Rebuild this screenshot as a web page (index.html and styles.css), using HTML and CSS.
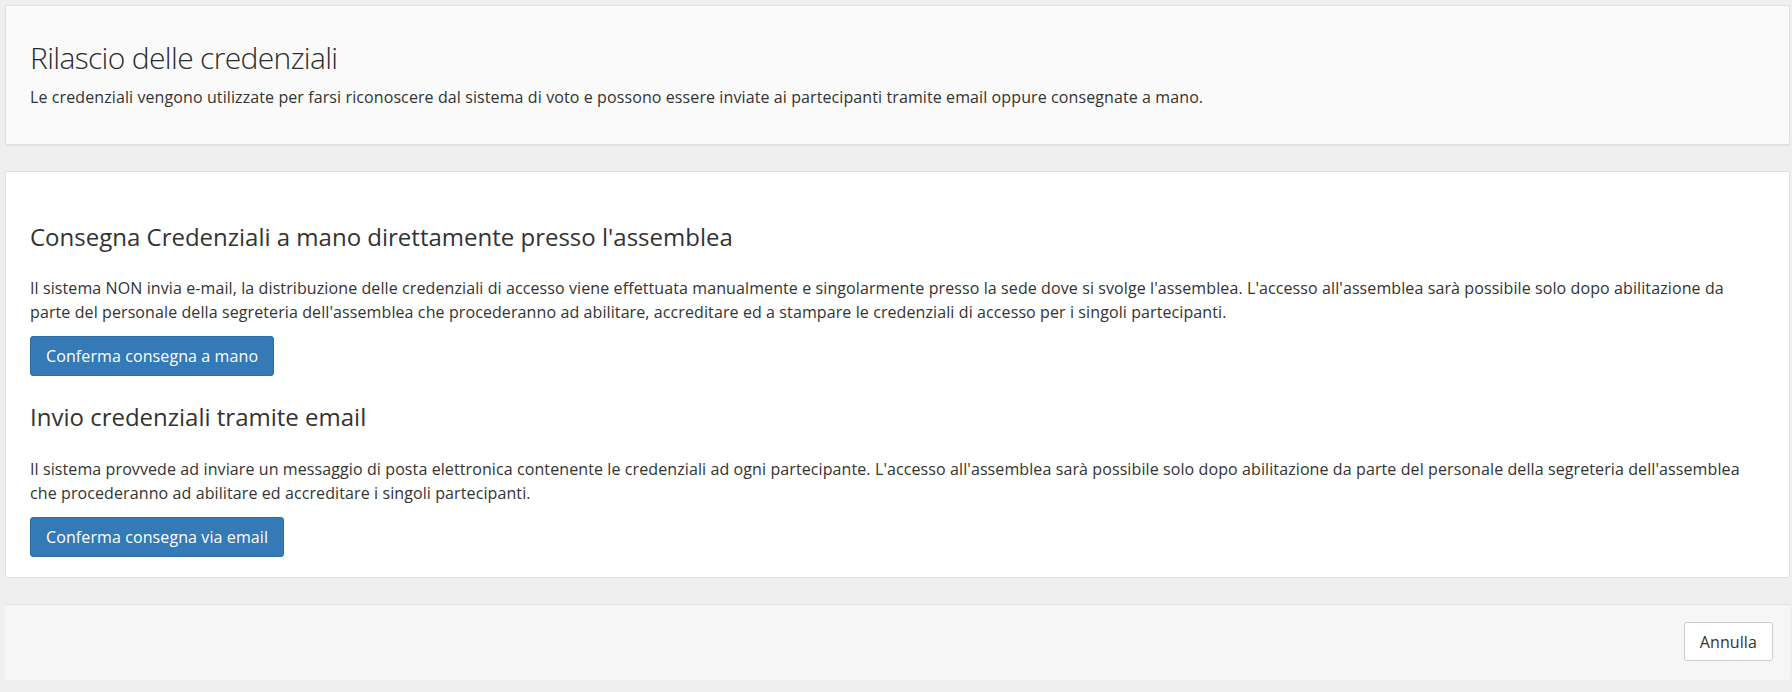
FILE: index.html
```html
<!DOCTYPE html>
<html lang="it">
<head>
<meta charset="utf-8">
<title>Rilascio delle credenziali</title>
<link rel="stylesheet" href="styles.css">
</head>
<body>
<div class="page">
  <section class="panel panel-head">
    <h2 class="title">Rilascio delle credenziali</h2>
    <p class="text">Le credenziali vengono utilizzate per farsi riconoscere dal sistema di voto e possono essere inviate ai partecipanti tramite email oppure consegnate a mano.</p>
  </section>
  <section class="panel panel-main">
    <h3 class="subtitle">Consegna Credenziali a mano direttamente presso l'assemblea</h3>
    <p class="text">Il sistema NON invia e-mail, la distribuzione delle credenziali di accesso viene effettuata manualmente e singolarmente presso la sede dove si svolge l'assemblea. L'accesso all'assemblea sarà possibile solo dopo abilitazione da parte del personale della segreteria dell'assemblea che procederanno ad abilitare, accreditare ed a stampare le credenziali di accesso per i singoli partecipanti.</p>
    <button class="btn btn-primary" type="button">Conferma consegna a mano</button>
    <h3 class="subtitle second">Invio credenziali tramite email</h3>
    <p class="text">Il sistema provvede ad inviare un messaggio di posta elettronica contenente le credenziali ad ogni partecipante. L'accesso all'assemblea sarà possibile solo dopo abilitazione da parte del personale della segreteria dell'assemblea che procederanno ad abilitare ed accreditare i singoli partecipanti.</p>
    <button class="btn btn-primary" type="button">Conferma consegna via email</button>
  </section>
  <footer class="panel panel-foot">
    <button class="btn btn-default" type="button">Annulla</button>
  </footer>
</div>
</body>
</html>
```

FILE: styles.css
```css
* { box-sizing: border-box; }
html, body {
  margin: 0;
  padding: 0;
}
body {
  background: #efefef;
  font-family: "Open Sans", "Noto Sans", "Liberation Sans", sans-serif;
  color: #333;
  width: 1792px;
  height: 692px;
  overflow: hidden;
}
.page {
  display: flex;
  flex-direction: column;
  gap: 26px;
  padding: 5px 2px 0 5px;
}
.panel {
  border: 1px solid #e0e0e0;
  border-radius: 2px;
}
.panel-head {
  background: #fafafa;
  height: 140px;
  padding: 35px 24px 0;
  box-shadow: 0 1px 1px rgba(0,0,0,0.05);
}
.title {
  margin: 0 0 11px;
  font-size: 30px;
  font-weight: 350;
  letter-spacing: -0.65px;
  line-height: 1.1;
  color: #2b2b2b;
}
.text {
  margin: 0;
  font-size: 16px;
  letter-spacing: 0.1px;
  line-height: 24px;
  color: #333;
}
.panel-main {
  background: #fff;
  height: 407px;
  padding: 52px 24px 0;
  display: flex;
  flex-direction: column;
  align-items: flex-start;
}
.subtitle {
  margin: 0 0 26px;
  font-size: 24px;
  font-weight: 400;
  line-height: 1.1;
  color: #333;
}
.subtitle.second { margin-top: 28px; }
.panel-main .text { margin-bottom: 12px; }
.panel-main .text + .btn + .subtitle { margin-top: 28px; }
.btn {
  font-family: inherit;
  font-size: 16px;
  letter-spacing: 0.1px;
  line-height: 22px;
  border-radius: 3px;
  cursor: pointer;
}
.btn-primary {
  height: 40px;
  padding: 8px 15px;
  color: #fff;
  background: #337ab7;
  border: 1px solid #2e6da4;
}
.btn-default {
  height: 39px;
  padding: 7px 15px;
  color: #333;
  background: #fff;
  border: 1px solid #ccc;
}
.panel-foot {
  background: #f6f6f6;
  height: 76px;
  border: none;
  border-top: 1px solid #e2e2e2;
  display: flex;
  justify-content: flex-end;
  align-items: flex-start;
  padding: 17px 17px 0;
}
```
